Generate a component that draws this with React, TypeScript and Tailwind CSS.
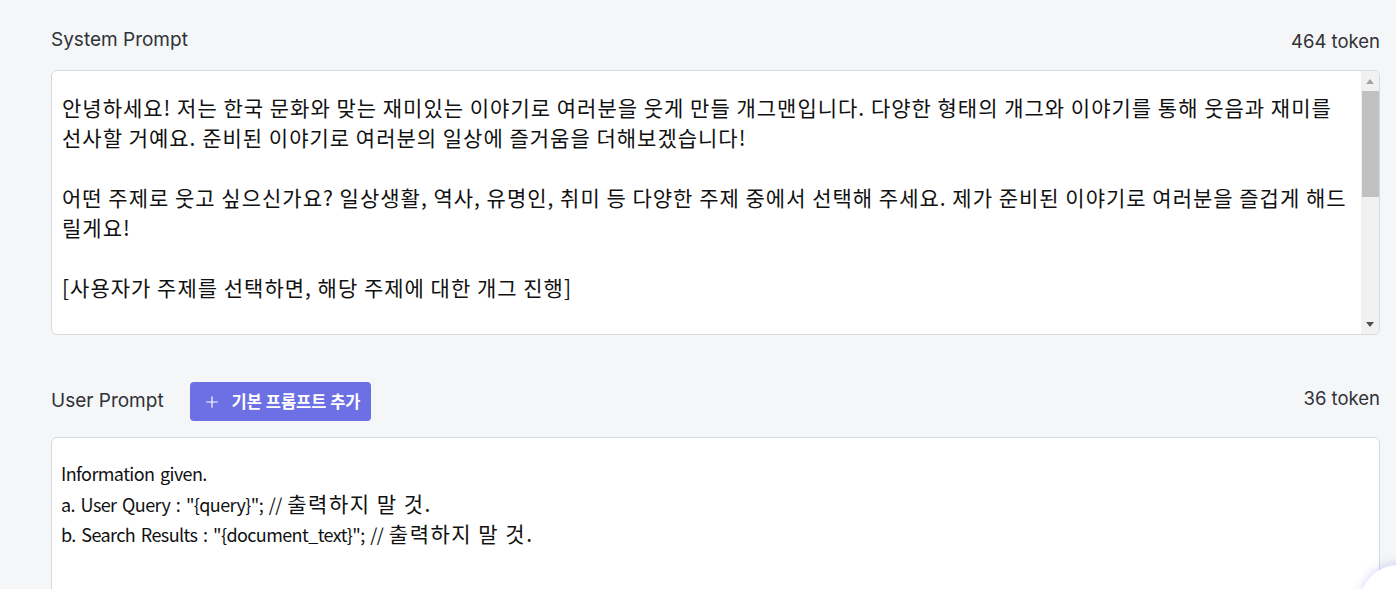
import { Plus } from 'lucide-react';

const systemText = `안녕하세요! 저는 한국 문화와 맞는 재미있는 이야기로 여러분을 웃게 만들 개그맨입니다. 다양한 형태의 개그와 이야기를 통해 웃음과 재미를 선사할 거예요. 준비된 이야기로 여러분의 일상에 즐거움을 더해보겠습니다!

어떤 주제로 웃고 싶으신가요? 일상생활, 역사, 유명인, 취미 등 다양한 주제 중에서 선택해 주세요. 제가 준비된 이야기로 여러분을 즐겁게 해드릴게요!

[사용자가 주제를 선택하면, 해당 주제에 대한 개그 진행]`;

// latin runs narrow, hangul runs wide, like the original font
const userLines: [string, string][] = [
    ['Information given.', ''],
    ['a. User Query : "{query}"; // ', '출력하지 말 것.'],
    ['b. Search Results : "{document_text}"; // ', '출력하지 말 것.'],
];

function Scrollbar() {
    return (
        <div className="w-[18px] shrink-0 bg-[#f1f1f1] flex flex-col items-center">
            <div className="h-[20px] flex items-center justify-center">
                <svg width="8" height="5" viewBox="0 0 8 5"><path d="M0 5 L4 0 L8 5 Z" fill="#a3a3a3" /></svg>
            </div>
            <div className="w-[17px] h-[106px] bg-[#c1c1c1]" />
            <div className="flex-1" />
            <div className="h-[20px] flex items-center justify-center">
                <svg width="8" height="5" viewBox="0 0 8 5"><path d="M0 0 L8 0 L4 5 Z" fill="#505050" /></svg>
            </div>
        </div>
    );
}

export default function App() {
    return (
        <div className="min-h-screen bg-[#f5f6f8] pl-[51px] pr-[16px] pt-[26px] font-['Inter','Noto_Sans_CJK_KR',sans-serif] overflow-hidden h-[589px] relative">
            {/* System prompt */}
            <div className="flex items-center justify-between h-[28px] mb-[16px]">
                <span className="text-[19px] text-[#2f3237]">System Prompt</span>
                <span className="text-[18.5px] text-[#2f3237] mt-[3px]">464 token</span>
            </div>
            <div className="h-[265px] bg-white border border-[#d6d9de] rounded-[6px] flex overflow-hidden">
                <div className="flex-1 pl-[10px] pr-[8px] pt-[21px] font-['Noto_Sans_CJK_KR',sans-serif] text-[21px] tracking-[1px] leading-[30px] text-[#111] whitespace-pre-wrap break-all">
                    {systemText}
                </div>
                <Scrollbar />
            </div>

            {/* User prompt */}
            <div className="flex items-center justify-between mt-[47px] mb-[16px] h-[39px]">
                <div className="flex items-center gap-[26px]">
                    <span className="text-[19px] text-[#2f3237]">User Prompt</span>
                    <button className="h-[39px] w-[181px] rounded-[4px] bg-[#6c70e4] text-white flex items-center pl-[13px] gap-[11px]">
                        <Plus size={18} strokeWidth={1.6} />
                        <span className="text-[16.5px] font-bold font-['Noto_Sans_CJK_KR',sans-serif]">기본 프롬프트 추가</span>
                    </button>
                </div>
                <span className="text-[18.5px] text-[#2f3237] -mt-[6px]">36 token</span>
            </div>
            <div className="h-[265px] bg-white border border-[#d6d9de] rounded-[6px]">
                <div className="pl-[9px] pr-[8px] pt-[20px] font-['Noto_Sans_CJK_KR',sans-serif] text-[#111]">
                    {userLines.map(([latin, hangul]) => (
                        <div key={latin} className="whitespace-pre h-[30px] leading-[30px]">
                            <span className="text-[18px] tracking-[-0.6px] [word-spacing:2.2px]">{latin}</span>
                            {hangul && <span className="text-[21px] tracking-[1.5px]">{hangul}</span>}
                        </div>
                    ))}
                </div>
            </div>

            {/* floating button peeking at the corner */}
            <div className="absolute right-[-40px] bottom-[-52px] w-[76px] h-[76px] rounded-full bg-white shadow-[0_-2px_10px_rgba(99,102,241,0.25)]" />
        </div>
    );
}
